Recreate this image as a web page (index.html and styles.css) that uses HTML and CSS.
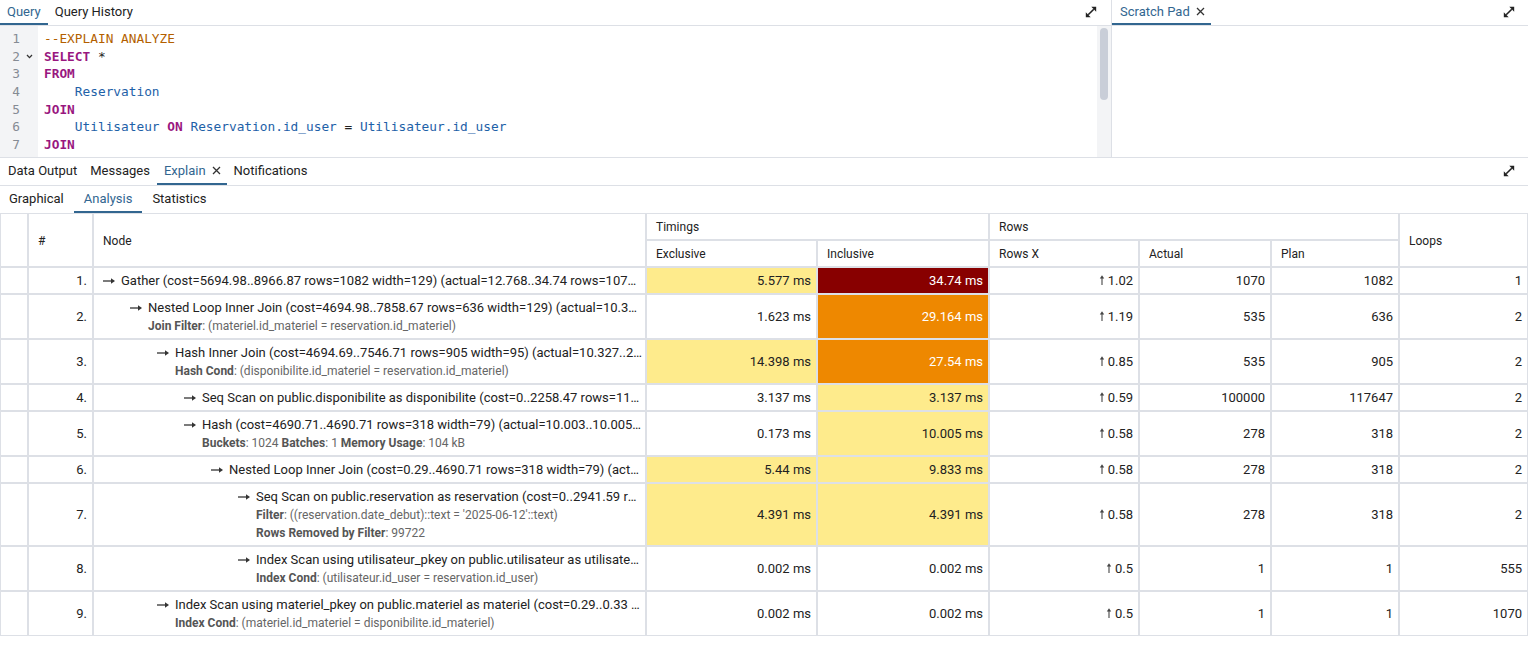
FILE: index.html
```html
<!DOCTYPE html>
<html lang="en">
<head>
<meta charset="utf-8">
<title>Query Tool</title>
<link rel="stylesheet" href="styles.css">
</head>
<body>
<div class="top">
  <section class="query-pane">
    <div class="tabbar">
      <div class="tab active">Query</div>
      <div class="tab">Query History</div>
      <div class="spacer"></div>
      <div class="icon-btn"><svg width="12" height="12" viewBox="0 0 12 12"><path d="M3.2 8.8L8.8 3.2" stroke="#222" stroke-width="1.6"/><polygon points="6.3,0.8 11.2,0.8 11.2,5.7" fill="#222"/><polygon points="0.8,6.3 0.8,11.2 5.7,11.2" fill="#222"/></svg></div>
    </div>
    <div class="editor">
      <div class="gutter">
        <div class="ln"><span class="num">1</span><span class="fold"></span></div>
        <div class="ln"><span class="num">2</span><span class="fold"><svg width="7" height="5" viewBox="0 0 7 5"><path d="M1 1l2.5 2.6L6 1" fill="none" stroke="#333" stroke-width="1.3"/></svg></span></div>
        <div class="ln"><span class="num">3</span><span class="fold"></span></div>
        <div class="ln"><span class="num">4</span><span class="fold"></span></div>
        <div class="ln"><span class="num">5</span><span class="fold"></span></div>
        <div class="ln"><span class="num">6</span><span class="fold"></span></div>
        <div class="ln"><span class="num">7</span><span class="fold"></span></div>
      </div>
      <div class="code">
        <div class="cl"><span class="c-cm">--EXPLAIN ANALYZE</span></div>
        <div class="cl"><span class="c-kw">SELECT</span> *</div>
        <div class="cl"><span class="c-kw">FROM</span></div>
        <div class="cl">    <span class="c-id">Reservation</span></div>
        <div class="cl"><span class="c-kw">JOIN</span></div>
        <div class="cl">    <span class="c-id">Utilisateur</span> <span class="c-kw">ON</span> <span class="c-id">Reservation.id_user</span> = <span class="c-id">Utilisateur.id_user</span></div>
        <div class="cl"><span class="c-kw">JOIN</span></div>
      </div>
      <div class="vscroll"><div class="thumb"></div></div>
    </div>
  </section>
  <section class="scratch-pane">
    <div class="tabbar">
      <div class="tab active scratch-tab">Scratch Pad <svg class="close" width="9" height="9" viewBox="0 0 9 9"><path d="M1 1l7 7M8 1l-7 7" stroke="#333" stroke-width="1.3"/></svg></div>
      <div class="spacer"></div>
      <div class="icon-btn right"><svg width="12" height="12" viewBox="0 0 12 12"><path d="M3.2 8.8L8.8 3.2" stroke="#222" stroke-width="1.6"/><polygon points="6.3,0.8 11.2,0.8 11.2,5.7" fill="#222"/><polygon points="0.8,6.3 0.8,11.2 5.7,11.2" fill="#222"/></svg></div>
    </div>
    <div class="scratch-body"></div>
  </section>
</div>

<div class="results">
  <div class="tabbar rtabs">
    <div class="tab first">Data Output</div>
    <div class="tab">Messages</div>
    <div class="tab active">Explain <svg class="close" width="9" height="9" viewBox="0 0 9 9"><path d="M1 1l7 7M8 1l-7 7" stroke="#333" stroke-width="1.3"/></svg></div>
    <div class="tab">Notifications</div>
    <div class="spacer"></div>
    <div class="icon-btn right"><svg width="12" height="12" viewBox="0 0 12 12"><path d="M3.2 8.8L8.8 3.2" stroke="#222" stroke-width="1.6"/><polygon points="6.3,0.8 11.2,0.8 11.2,5.7" fill="#222"/><polygon points="0.8,6.3 0.8,11.2 5.7,11.2" fill="#222"/></svg></div>
  </div>
  <div class="subtabs">
    <div class="stab">Graphical</div>
    <div class="stab active">Analysis</div>
    <div class="stab">Statistics</div>
  </div>

  <table class="plan">
    <colgroup>
      <col class="w-blank"><col class="w-idx"><col class="w-node"><col class="w-exc"><col class="w-inc"><col class="w-rx"><col class="w-act"><col class="w-plan"><col class="w-loops">
    </colgroup>
    <thead>
      <tr>
        <th rowspan="2"></th>
        <th rowspan="2">#</th>
        <th rowspan="2">Node</th>
        <th colspan="2">Timings</th>
        <th colspan="3">Rows</th>
        <th rowspan="2">Loops</th>
      </tr>
      <tr>
        <th>Exclusive</th>
        <th>Inclusive</th>
        <th>Rows X</th>
        <th>Actual</th>
        <th>Plan</th>
      </tr>
    </thead>
    <tbody>
      <tr>
        <td></td><td class="num">1.</td>
        <td class="nodecell"><div class="node l0"><div class="main"><svg class="arr" width="12" height="8" viewBox="0 0 12 8"><path d="M0 4h8.5" stroke="#333" stroke-width="1.3"/><polygon points="8,1.3 12,4 8,6.7" fill="#333"/></svg>Gather (cost=5694.98..8966.87 rows=1082 width=129) (actual=12.768..34.74 rows=1070 loops=1)</div></div></td>
        <td class="num y">5.577 ms</td><td class="num r">34.74 ms</td>
        <td class="num"><svg class="up" width="6" height="10" viewBox="0 0 6 10"><path d="M3 2.5V10" stroke="#444" stroke-width="1.1"/><polygon points="0.8,3.6 3,0.3 5.2,3.6" fill="#444"/></svg>1.02</td>
        <td class="num">1070</td><td class="num">1082</td><td class="num">1</td>
      </tr>
      <tr>
        <td></td><td class="num">2.</td>
        <td class="nodecell"><div class="node l1"><div class="main"><svg class="arr" width="12" height="8" viewBox="0 0 12 8"><path d="M0 4h8.5" stroke="#333" stroke-width="1.3"/><polygon points="8,1.3 12,4 8,6.7" fill="#333"/></svg>Nested Loop Inner Join (cost=4694.98..7858.67 rows=636 width=129) (actual=10.35..29.164 rows=535 loops=2)</div><div class="det"><b>Join Filter</b>: (materiel.id_materiel = reservation.id_materiel)</div></div></td>
        <td class="num">1.623 ms</td><td class="num o">29.164 ms</td>
        <td class="num"><svg class="up" width="6" height="10" viewBox="0 0 6 10"><path d="M3 2.5V10" stroke="#444" stroke-width="1.1"/><polygon points="0.8,3.6 3,0.3 5.2,3.6" fill="#444"/></svg>1.19</td>
        <td class="num">535</td><td class="num">636</td><td class="num">2</td>
      </tr>
      <tr>
        <td></td><td class="num">3.</td>
        <td class="nodecell"><div class="node l2"><div class="main"><svg class="arr" width="12" height="8" viewBox="0 0 12 8"><path d="M0 4h8.5" stroke="#333" stroke-width="1.3"/><polygon points="8,1.3 12,4 8,6.7" fill="#333"/></svg>Hash Inner Join (cost=4694.69..7546.71 rows=905 width=95) (actual=10.327..27.54 rows=535 loops=2)</div><div class="det"><b>Hash Cond</b>: (disponibilite.id_materiel = reservation.id_materiel)</div></div></td>
        <td class="num y">14.398 ms</td><td class="num o">27.54 ms</td>
        <td class="num"><svg class="up" width="6" height="10" viewBox="0 0 6 10"><path d="M3 2.5V10" stroke="#444" stroke-width="1.1"/><polygon points="0.8,3.6 3,0.3 5.2,3.6" fill="#444"/></svg>0.85</td>
        <td class="num">535</td><td class="num">905</td><td class="num">2</td>
      </tr>
      <tr>
        <td></td><td class="num">4.</td>
        <td class="nodecell"><div class="node l3"><div class="main"><svg class="arr" width="12" height="8" viewBox="0 0 12 8"><path d="M0 4h8.5" stroke="#333" stroke-width="1.3"/><polygon points="8,1.3 12,4 8,6.7" fill="#333"/></svg>Seq Scan on public.disponibilite as disponibilite (cost=0..2258.47 rows=117647 width=16) (actual=0.003..3.137 rows=100000 loops=2)</div></div></td>
        <td class="num">3.137 ms</td><td class="num y">3.137 ms</td>
        <td class="num"><svg class="up" width="6" height="10" viewBox="0 0 6 10"><path d="M3 2.5V10" stroke="#444" stroke-width="1.1"/><polygon points="0.8,3.6 3,0.3 5.2,3.6" fill="#444"/></svg>0.59</td>
        <td class="num">100000</td><td class="num">117647</td><td class="num">2</td>
      </tr>
      <tr>
        <td></td><td class="num">5.</td>
        <td class="nodecell"><div class="node l3"><div class="main"><svg class="arr" width="12" height="8" viewBox="0 0 12 8"><path d="M0 4h8.5" stroke="#333" stroke-width="1.3"/><polygon points="8,1.3 12,4 8,6.7" fill="#333"/></svg>Hash (cost=4690.71..4690.71 rows=318 width=79) (actual=10.003..10.005 rows=278 loops=2)</div><div class="det"><b>Buckets</b>: 1024 <b>Batches</b>: 1 <b>Memory Usage</b>: 104 kB</div></div></td>
        <td class="num">0.173 ms</td><td class="num y">10.005 ms</td>
        <td class="num"><svg class="up" width="6" height="10" viewBox="0 0 6 10"><path d="M3 2.5V10" stroke="#444" stroke-width="1.1"/><polygon points="0.8,3.6 3,0.3 5.2,3.6" fill="#444"/></svg>0.58</td>
        <td class="num">278</td><td class="num">318</td><td class="num">2</td>
      </tr>
      <tr>
        <td></td><td class="num">6.</td>
        <td class="nodecell"><div class="node l4"><div class="main"><svg class="arr" width="12" height="8" viewBox="0 0 12 8"><path d="M0 4h8.5" stroke="#333" stroke-width="1.3"/><polygon points="8,1.3 12,4 8,6.7" fill="#333"/></svg>Nested Loop Inner Join (cost=0.29..4690.71 rows=318 width=79) (actual=0.101..9.833 rows=278 loops=2)</div></div></td>
        <td class="num y">5.44 ms</td><td class="num y">9.833 ms</td>
        <td class="num"><svg class="up" width="6" height="10" viewBox="0 0 6 10"><path d="M3 2.5V10" stroke="#444" stroke-width="1.1"/><polygon points="0.8,3.6 3,0.3 5.2,3.6" fill="#444"/></svg>0.58</td>
        <td class="num">278</td><td class="num">318</td><td class="num">2</td>
      </tr>
      <tr>
        <td></td><td class="num">7.</td>
        <td class="nodecell"><div class="node l5"><div class="main"><svg class="arr" width="12" height="8" viewBox="0 0 12 8"><path d="M0 4h8.5" stroke="#333" stroke-width="1.3"/><polygon points="8,1.3 12,4 8,6.7" fill="#333"/></svg>Seq Scan on public.reservation as reservation (cost=0..2941.59 rows=318 width=40) (actual=0.012..4.391 rows=278 loops=2)</div><div class="det"><b>Filter</b>: ((reservation.date_debut)::text = '2025-06-12'::text)</div><div class="det"><b>Rows Removed by Filter</b>: 99722</div></div></td>
        <td class="num y">4.391 ms</td><td class="num y">4.391 ms</td>
        <td class="num"><svg class="up" width="6" height="10" viewBox="0 0 6 10"><path d="M3 2.5V10" stroke="#444" stroke-width="1.1"/><polygon points="0.8,3.6 3,0.3 5.2,3.6" fill="#444"/></svg>0.58</td>
        <td class="num">278</td><td class="num">318</td><td class="num">2</td>
      </tr>
      <tr>
        <td></td><td class="num">8.</td>
        <td class="nodecell"><div class="node l5"><div class="main"><svg class="arr" width="12" height="8" viewBox="0 0 12 8"><path d="M0 4h8.5" stroke="#333" stroke-width="1.3"/><polygon points="8,1.3 12,4 8,6.7" fill="#333"/></svg>Index Scan using utilisateur_pkey on public.utilisateur as utilisateur (cost=0.29..0.33 rows=1 width=39) (actual=0.002..0.002 rows=1 loops=555)</div><div class="det"><b>Index Cond</b>: (utilisateur.id_user = reservation.id_user)</div></div></td>
        <td class="num">0.002 ms</td><td class="num">0.002 ms</td>
        <td class="num"><svg class="up" width="6" height="10" viewBox="0 0 6 10"><path d="M3 2.5V10" stroke="#444" stroke-width="1.1"/><polygon points="0.8,3.6 3,0.3 5.2,3.6" fill="#444"/></svg>0.5</td>
        <td class="num">1</td><td class="num">1</td><td class="num">555</td>
      </tr>
      <tr>
        <td></td><td class="num">9.</td>
        <td class="nodecell"><div class="node l2"><div class="main"><svg class="arr" width="12" height="8" viewBox="0 0 12 8"><path d="M0 4h8.5" stroke="#333" stroke-width="1.3"/><polygon points="8,1.3 12,4 8,6.7" fill="#333"/></svg>Index Scan using materiel_pkey on public.materiel as materiel (cost=0.29..0.33 rows=1 width=34) (actual=0.002..0.002 rows=1 loops=1070)</div><div class="det"><b>Index Cond</b>: (materiel.id_materiel = disponibilite.id_materiel)</div></div></td>
        <td class="num">0.002 ms</td><td class="num">0.002 ms</td>
        <td class="num"><svg class="up" width="6" height="10" viewBox="0 0 6 10"><path d="M3 2.5V10" stroke="#444" stroke-width="1.1"/><polygon points="0.8,3.6 3,0.3 5.2,3.6" fill="#444"/></svg>0.5</td>
        <td class="num">1</td><td class="num">1</td><td class="num">1070</td>
      </tr>
    </tbody>
  </table>
</div>
</body>
</html>
```

FILE: styles.css
```css
html, body {
  margin: 0;
  padding: 0;
}
body {
  width: 1528px;
  height: 650px;
  overflow: hidden;
  background: #fff;
  color: #222;
  font-family: Roboto, "Liberation Sans", Arial, sans-serif;
  font-size: 13px;
}

/* ---------- top panes ---------- */
.top {
  display: flex;
  height: 158px;
  border-bottom: 1px solid #dde0e6;
  box-sizing: border-box;
}
.query-pane {
  width: 1112px;
  border-right: 1px solid #dde0e6;
  box-sizing: border-box;
  display: flex;
  flex-direction: column;
}
.scratch-pane {
  flex: 1;
  display: flex;
  flex-direction: column;
}
.tabbar {
  display: flex;
  align-items: stretch;
  height: 26px;
  border-bottom: 1px solid #dde0e6;
  box-sizing: border-box;
  flex: none;
}
.tab {
  display: flex;
  align-items: center;
  padding: 0 7px 1px;
  border-bottom: 2px solid transparent;
  white-space: nowrap;
}
.tab.active {
  color: #326690;
  border-bottom-color: #326690;
}
.tab .close {
  margin-left: 6px;
}
.tab.active:has(.close) {
  padding-right: 6px;
}
.scratch-tab {
  padding-left: 8px;
}
.spacer {
  flex: 1;
}
.icon-btn {
  display: flex;
  align-items: center;
  padding: 0 14px 2px 12px;
}
.icon-btn.right {
  padding-right: 13px;
}

/* ---------- editor ---------- */
.editor {
  flex: 1;
  display: flex;
  min-height: 0;
  overflow: hidden;
}
.gutter {
  width: 38px;
  flex: none;
  background: #f3f4f6;
  padding-top: 4px;
  box-sizing: border-box;
  font-family: "DejaVu Sans Mono", "Liberation Mono", monospace;
  font-size: 12.8px;
  line-height: 17.7px;
  color: #858b94;
}
.ln {
  display: flex;
  align-items: center;
  height: 17.7px;
}
.ln .num {
  width: 20px;
  text-align: right;
}
.ln .fold {
  width: 18px;
  display: flex;
  justify-content: center;
  align-items: center;
}
.code {
  flex: 1;
  padding: 4px 0 0 6px;
  font-family: "DejaVu Sans Mono", "Liberation Mono", monospace;
  font-size: 12.8px;
  line-height: 17.7px;
  color: #222;
  overflow: hidden;
}
.cl {
  height: 17.7px;
  white-space: pre;
}
.c-cm { color: #b35f00; }
.c-kw { color: #99177f; font-weight: bold; }
.c-id { color: #1e61a8; }
.vscroll {
  width: 14px;
  flex: none;
  background: #f3f4f6;
  padding: 2px 3px 0 3px;
  box-sizing: border-box;
}
.thumb {
  width: 8px;
  height: 72px;
  border-radius: 4px;
  background: #c9ced8;
}
.scratch-body {
  flex: 1;
}

/* ---------- results ---------- */
.rtabs {
  height: 28px;
}
.rtabs .tab.first {
  padding-left: 8px;
  padding-right: 6px;
}
.subtabs {
  display: flex;
  height: 27px;
}
.stab {
  display: flex;
  align-items: center;
  padding: 0 10px;
  border-bottom: 2px solid transparent;
  white-space: nowrap;
}
.stab:first-child {
  padding-left: 9px;
}
.stab.active {
  color: #326690;
  border-bottom-color: #326690;
}

/* ---------- plan table ---------- */
.plan {
  width: 1528px;
  table-layout: fixed;
  border-collapse: separate;
  border-spacing: 0;
  font-size: 13px;
  line-height: 18px;
}
.w-blank { width: 28px; }
.w-idx { width: 65px; }
.w-node { width: 553px; }
.w-exc { width: 171px; }
.w-inc { width: 172px; }
.w-rx { width: 150px; }
.w-act { width: 132px; }
.w-plan { width: 128px; }
.w-loops { width: 129px; }

.plan th,
.plan td {
  border: 1px solid #dde0e6;
  padding: 4px 5px 3px 9px;
  vertical-align: middle;
  overflow: hidden;
}
.plan td.nodecell {
  padding-right: 2px;
}
.plan th {
  font-weight: normal;
  font-size: 12px;
  text-align: left;
  padding-top: 4px;
  padding-bottom: 3px;
}
.plan td.num {
  text-align: right;
  white-space: nowrap;
}
.plan td.y { background: #feeb8c; }
.plan td.o { background: #ee8800; color: #fff; }
.plan td.r { background: #880000; color: #fff; }

.node {
  min-width: 0;
}
.node .main,
.node .det {
  white-space: nowrap;
  overflow: hidden;
  text-overflow: ellipsis;
}
.node .det {
  padding-left: 18px;
  font-size: 12px;
  color: #666;
}
.node .det b {
  color: #555;
  font-weight: bold;
}
.arr {
  display: inline-block;
  vertical-align: middle;
  margin: -2px 6px 0 0;
}
.up {
  display: inline-block;
  vertical-align: middle;
  margin: -3px 3px 0 0;
}
.l0 { padding-left: 0; }
.l1 { padding-left: 27px; }
.l2 { padding-left: 54px; }
.l3 { padding-left: 81px; }
.l4 { padding-left: 108px; }
.l5 { padding-left: 135px; }
```
